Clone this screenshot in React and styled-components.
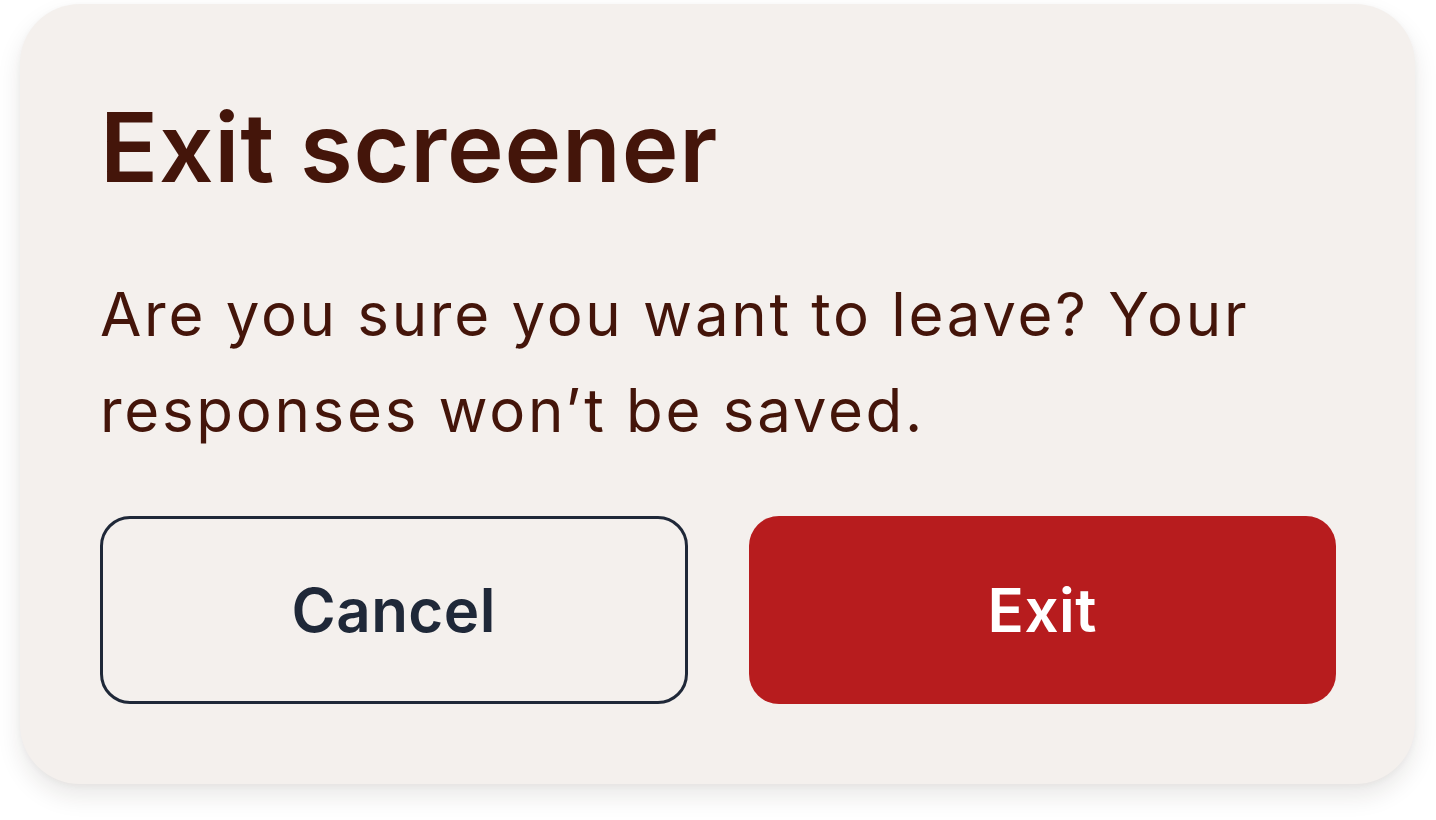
import styled, { createGlobalStyle } from "styled-components";

// Page reset
const GlobalStyle = createGlobalStyle`
  body {
    margin: 0;
    background-color: #ffffff;
    font-family: Inter, "Noto Sans", sans-serif;
  }
`;

const Page = styled.div`
  width: 1436px;
  height: 820px;

  padding: 4px 21px 0 20px;
  box-sizing: border-box;
`;

const Dialog = styled.div`
  width: 1395px;
  height: 780px;
  box-sizing: border-box;

  display: flex;
  flex-direction: column;

  padding: 83px 79px 80px 80px;

  border-radius: 60px;
  background-color: #f4f0ed;
  box-shadow: 0 12px 24px rgba(40, 30, 20, 0.1), 0 2px 6px rgba(40, 30, 20, 0.04);
`;

const Title = styled.h1`
  margin: 0;

  font-size: 96px;
  line-height: 120px;
  font-weight: 600;
  letter-spacing: 0.8px;
  color: #44150a;
`;

const Message = styled.p`
  margin: 59px 0 0;

  font-size: 60px;
  line-height: 96px;
  font-weight: 400;
  letter-spacing: 2.7px;
  color: #44150a;
`;

const Actions = styled.div`
  display: grid;
  grid-template-columns: 1fr 1fr;
  gap: 61px;

  margin-top: auto;
`;

const Button = styled.button`
  height: 188px;
  box-sizing: border-box;

  display: flex;
  align-items: center;
  justify-content: center;

  border-radius: 30px;
  border: ${({ $primary }) => ($primary ? "none" : "3px solid #1f2838")};
  background-color: ${({ $primary }) => ($primary ? "#b71c1e" : "transparent")};

  font-family: Inter, "Noto Sans", sans-serif;
  font-size: 60px;
  font-weight: 600;
  letter-spacing: 0.5px;
  color: ${({ $primary }) => ($primary ? "#ffffff" : "#1f2838")};

  cursor: pointer;
`;

export default function App() {
  return (
    <>
      <GlobalStyle />
      <Page>
        <Dialog>
          <Title>Exit screener</Title>
          <Message>
            Are you sure you want to leave? Your responses won’t be saved.
          </Message>
          <Actions>
            <Button>Cancel</Button>
            <Button $primary>Exit</Button>
          </Actions>
        </Dialog>
      </Page>
    </>
  );
}
